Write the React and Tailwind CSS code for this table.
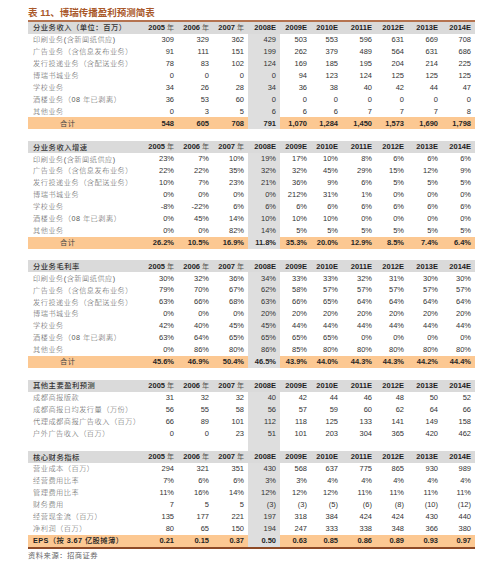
import React from "react";

const YEARS = ["2005", "2006", "2007", "2008E", "2009E", "2010E", "2011E", "2012E", "2013E", "2014E"];

const sections = [
  {
    title: "分业务收入（单位：百万）",
    rows: [
      ["印刷业务(含新闻纸供应)", ["309", "329", "362", "429", "503", "553", "596", "631", "669", "708"]],
      ["广告业务（含信息发布业务）", ["91", "111", "151", "199", "262", "379", "489", "564", "631", "686"]],
      ["发行投递业务（含配送业务）", ["78", "83", "102", "124", "169", "185", "195", "204", "214", "225"]],
      ["博瑞书城业务", ["0", "0", "0", "0", "94", "123", "124", "125", "125", "125"]],
      ["学校业务", ["34", "26", "28", "34", "36", "38", "40", "42", "44", "47"]],
      ["酒楼业务（08 年已剥离）", ["36", "53", "60", "0", "0", "0", "0", "0", "0", "0"]],
      ["其他业务", ["0", "3", "5", "6", "6", "6", "7", "7", "7", "8"]],
    ],
    total: ["合计", ["548", "605", "708", "791", "1,070", "1,284", "1,450", "1,573", "1,690", "1,798"]],
    gap: true,
  },
  {
    title: "分业务收入增速",
    rows: [
      ["印刷业务(含新闻纸供应)", ["23%", "7%", "10%", "19%", "17%", "10%", "8%", "6%", "6%", "6%"]],
      ["广告业务（含信息发布业务）", ["22%", "22%", "35%", "32%", "32%", "45%", "29%", "15%", "12%", "9%"]],
      ["发行投递业务（含配送业务）", ["10%", "7%", "23%", "21%", "36%", "9%", "6%", "5%", "5%", "5%"]],
      ["博瑞书城业务", ["0%", "0%", "0%", "0%", "212%", "31%", "1%", "0%", "0%", "0%"]],
      ["学校业务", ["-8%", "-22%", "6%", "6%", "6%", "6%", "6%", "6%", "6%", "6%"]],
      ["酒楼业务（08 年已剥离）", ["0%", "45%", "14%", "10%", "10%", "10%", "0%", "0%", "0%", "0%"]],
      ["其他业务", ["0%", "0%", "82%", "14%", "5%", "5%", "5%", "5%", "5%", "5%"]],
    ],
    total: ["合计", ["26.2%", "10.5%", "16.9%", "11.8%", "35.3%", "20.0%", "12.9%", "8.5%", "7.4%", "6.4%"]],
    gap: true,
  },
  {
    title: "分业务毛利率",
    rows: [
      ["印刷业务(含新闻纸供应)", ["30%", "32%", "36%", "34%", "33%", "33%", "32%", "31%", "30%", "30%"]],
      ["广告业务（含信息发布业务）", ["79%", "70%", "67%", "62%", "58%", "57%", "57%", "57%", "57%", "57%"]],
      ["发行投递业务（含配送业务）", ["63%", "66%", "68%", "63%", "66%", "65%", "64%", "64%", "64%", "64%"]],
      ["博瑞书城业务", ["0%", "0%", "0%", "20%", "20%", "20%", "20%", "20%", "20%", "20%"]],
      ["学校业务", ["42%", "40%", "45%", "45%", "44%", "44%", "44%", "44%", "44%", "44%"]],
      ["酒楼业务（08 年已剥离）", ["63%", "64%", "65%", "65%", "65%", "65%", "0%", "0%", "0%", "0%"]],
      ["其他业务", ["0%", "86%", "80%", "86%", "85%", "80%", "80%", "80%", "80%", "80%"]],
    ],
    total: ["合计", ["45.6%", "46.9%", "50.4%", "46.5%", "43.9%", "44.0%", "44.3%", "44.3%", "44.2%", "44.4%"]],
    gap: true,
  },
  {
    title: "其他主要盈利预测",
    rows: [
      ["成都商报版款", ["31", "32", "32", "40", "42", "44", "46", "48", "50", "52"]],
      ["成都商报日均发行量（万份）", ["56", "55", "58", "56", "57", "59", "60", "62", "64", "66"]],
      ["代理成都商报广告收入（百万）", ["66", "89", "101", "112", "118", "125", "133", "141", "149", "158"]],
      ["户外广告收入（百万）", ["0", "0", "23", "51", "101", "203", "304", "365", "420", "462"]],
    ],
    blank: true,
  },
  {
    title: "核心财务指标",
    rows: [
      ["营业成本（百万）", ["294", "321", "351", "430", "568", "637", "775", "865", "930", "989"]],
      ["经营费用比率", ["7%", "6%", "6%", "3%", "3%", "4%", "4%", "4%", "4%", "4%"]],
      ["管理费用比率", ["11%", "16%", "14%", "12%", "12%", "12%", "11%", "11%", "11%", "11%"]],
      ["财务费用", ["7", "5", "5", "(3)", "(3)", "(5)", "(6)", "(8)", "(10)", "(12)"]],
      ["经营现金流（百万）", ["135", "177", "221", "197", "318", "384", "424", "424", "430", "440"]],
      ["净利润（百万）", ["80", "65", "150", "194", "247", "333", "338", "348", "366", "380"]],
    ],
    total: ["EPS（按 3.67 亿股摊薄）", ["0.21", "0.15", "0.37", "0.50", "0.63", "0.85", "0.86", "0.89", "0.93", "0.97"]],
    eps: true,
  },
];

const GRID =
  "grid grid-cols-[113px_37px_35px_35px_32px_31px_31px_34px_32px_34px_33px] h-[11.93px] items-stretch";

function Cell({ children, className = "" }) {
  return (
    <div className={`flex items-center justify-end pr-[4px] leading-none whitespace-nowrap ${className}`}>
      {children}
    </div>
  );
}

function HeaderRow({ title }) {
  return (
    <div className={`${GRID} bg-[#dadada]`}>
      <div className="flex items-center pl-[5px] leading-none whitespace-nowrap text-[7.3px] tracking-[0.5px] text-[#333] font-medium">
        {title}
      </div>
      {YEARS.map((y) => (
        <Cell key={y} className="text-[7.5px] text-[#1f1f1f]">
          {y.endsWith("E") ? (
            <span className="font-bold">{y}</span>
          ) : (
            <span>
              <span className="font-bold">{y}</span>
              <span className="text-[#555] text-[7px]"> 年</span>
            </span>
          )}
        </Cell>
      ))}
    </div>
  );
}

function DataRow({ label, values }) {
  return (
    <div className={`${GRID} bg-white`}>
      <div className="flex items-center pl-[5px] leading-none whitespace-nowrap text-[7.2px] tracking-[0.5px] font-light text-[#5a5a5a]">
        {label}
      </div>
      {values.map((v, i) => (
        <Cell key={i} className={`text-[7.5px] text-[#333] ${i === 3 ? "bg-[#dedede]" : ""}`}>
          {v}
        </Cell>
      ))}
    </div>
  );
}

function TotalRow({ label, values, eps }) {
  return (
    <div className={`${GRID} bg-[#fcc892]`}>
      <div
        className={`flex items-center leading-none whitespace-nowrap text-[7.3px] tracking-[0.4px] ${
          eps ? "pl-[5px] text-[#222] font-medium" : "pl-[32px] text-[#444]"
        }`}
      >
        {eps ? (
          <span>
            <span className="font-bold">EPS</span>
            <span>（按 </span>
            <span className="font-bold">3.67</span>
            <span> 亿股摊薄）</span>
          </span>
        ) : (
          label
        )}
      </div>
      {values.map((v, i) => (
        <Cell key={i} className={`text-[7.5px] font-bold text-[#262626] ${i === 3 ? "bg-[#dedede]" : ""}`}>
          {v}
        </Cell>
      ))}
    </div>
  );
}

function BlankRow({ gray }) {
  return (
    <div className={`${GRID} bg-white`}>
      <div />
      {YEARS.map((y, i) => (
        <div key={y} className={gray && i === 3 ? "bg-[#dedede]" : ""} />
      ))}
    </div>
  );
}

export default function App() {
  return (
    <div className="w-[499px] h-[565px] bg-white font-['Liberation_Sans','Noto_Sans_CJK_SC',sans-serif] overflow-hidden">
      <div className="h-[20px] pl-[28px] pt-[8px] flex items-start">
        <span className="text-[9.5px] leading-none text-[#a9582a] font-semibold whitespace-nowrap">
          表 <span className="font-bold">11</span>、博瑞传播盈利预测简表
        </span>
      </div>
      <div className="ml-[28px] w-[447px] border-t-2 border-[#b57350]">
        {sections.map((s, si) => (
          <div key={si}>
            <HeaderRow title={s.title} />
            {s.rows.map(([l, v], ri) => (
              <DataRow key={ri} label={l} values={v} />
            ))}
            {s.blank && <BlankRow gray />}
            {s.total && <TotalRow label={s.total[0]} values={s.total[1]} eps={s.eps} />}
            {s.gap && <BlankRow />}
          </div>
        ))}
        <div className="h-[2px] bg-[#8e4a26]" />
      </div>
      <div className="pl-[28px] pt-[3px] text-[7.3px] tracking-[0.5px] leading-none text-[#666] whitespace-nowrap">
        资料来源：招商证券
      </div>
    </div>
  );
}
